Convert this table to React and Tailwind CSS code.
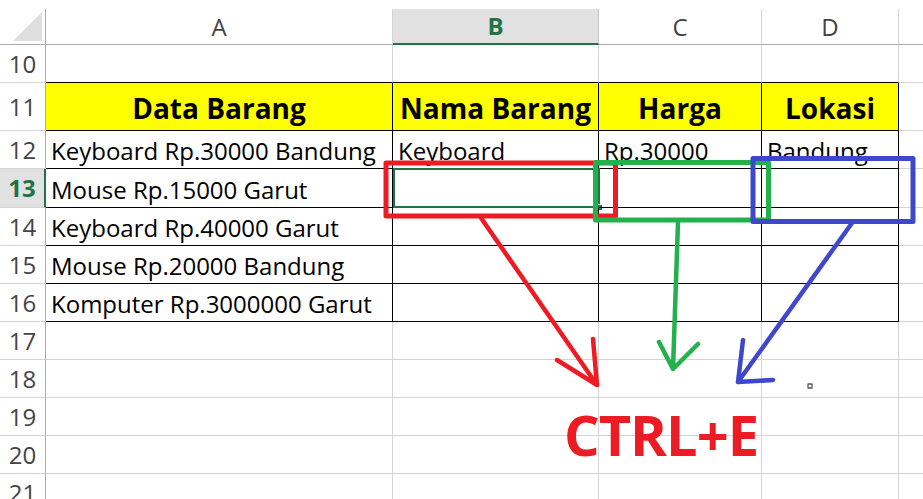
const cols = [
  { key: "A", w: "w-[347px]" },
  { key: "B", w: "w-[206px]" },
  { key: "C", w: "w-[163px]" },
  { key: "D", w: "w-[137px]" },
  { key: "E", w: "w-[40px]" },
];

const rows = [
  { n: 10, h: "h-[38px]", cells: ["", "", "", ""] },
  { n: 11, h: "h-[48px]", head: true, cells: ["Data Barang", "Nama Barang", "Harga", "Lokasi"] },
  { n: 12, h: "h-[38px]", cells: ["Keyboard Rp.30000 Bandung", "Keyboard", "Rp.30000", "Bandung"] },
  { n: 13, h: "h-[39px]", active: true, cells: ["Mouse Rp.15000 Garut", "", "", ""] },
  { n: 14, h: "h-[38px]", cells: ["Keyboard Rp.40000 Garut", "", "", ""] },
  { n: 15, h: "h-[38px]", cells: ["Mouse Rp.20000 Bandung", "", "", ""] },
  { n: 16, h: "h-[38px]", cells: ["Komputer Rp.3000000 Garut", "", "", ""] },
  { n: 17, h: "h-[38px]" },
  { n: 18, h: "h-[38px]" },
  { n: 19, h: "h-[38px]" },
  { n: 20, h: "h-[38px]" },
  { n: 21, h: "h-[38px]" },
];

const cellFont = { fontFamily: '"Open Sans", "Noto Sans", sans-serif' };

const Cell = ({ row, col, text }) => {
  const inTable = row.n >= 11 && row.n <= 16 && col < 4;
  const aboveTable = row.n === 10 && col < 4;
  const isHead = row.head && col < 4;
  let border = "border-r border-b border-[#d4d4d4]";
  if (inTable) border = "border-r border-b border-black";
  else if (aboveTable) border = "border-r border-r-[#d4d4d4] border-b border-b-black";

  return (
    <div
      className={`${cols[col].w} ${row.h} shrink-0 relative flex ${border} ${
        isHead ? "bg-[#ffff00] items-center justify-center" : "items-end px-[5px] pb-[1px]"
      }`}
    >
      {text ? (
        <span
          className={
            isHead
              ? "text-[28px] font-bold leading-none text-black whitespace-nowrap pt-[3px]"
              : "text-[24px] leading-[32px] text-black whitespace-nowrap"
          }
        >
          {text}
        </span>
      ) : null}
      {row.active && col === 1 ? (
        <div className="absolute left-0 top-[-1px] w-[207px] h-[40px] border-2 border-[#217346]">
          <div className="absolute right-[-5px] bottom-[-5px] w-[7px] h-[7px] bg-[#217346] border border-white" />
        </div>
      ) : null}
    </div>
  );
};

const Overlay = () => (
  <svg
    className="absolute left-0 top-0 pointer-events-none"
    width="923"
    height="499"
    viewBox="0 0 923 499"
    fill="none"
    strokeLinecap="round"
    strokeLinejoin="round"
  >
    {/* boxes */}
    <rect x="386" y="163" width="229.5" height="53" stroke="#ed1c24" strokeWidth="5" strokeLinecap="butt" />
    <rect x="595.5" y="162.5" width="173" height="57.5" stroke="#22b14c" strokeWidth="5" strokeLinecap="butt" />
    <rect x="753" y="158.5" width="160" height="63" stroke="#3f48cc" strokeWidth="5" strokeLinecap="butt" />
    {/* red arrow */}
    <path d="M481 218 L597 385 M593 339 L597 385 L557 360" stroke="#ed1c24" strokeWidth="4.5" />
    {/* green arrow */}
    <path d="M678 222 L673 369 M659 342 L673 369 L698 344" stroke="#22b14c" strokeWidth="4.5" />
    {/* blue arrow */}
    <path d="M852 223 L738 382 M743 340 L738 382 L773 380" stroke="#3f48cc" strokeWidth="4.5" />
    <rect x="808" y="384" width="4" height="4" stroke="#555" strokeWidth="1.3" />
  </svg>
);

export default function App() {
  return (
    <div className="relative w-[923px] h-[499px] overflow-hidden bg-white" style={cellFont}>
      <div className="h-[9px]" />
      {/* column headers */}
      <div className="flex h-[36px]">
        <div className="w-[46px] shrink-0 relative border-r border-b border-[#ababab] overflow-hidden">
          <div className="absolute right-[3px] bottom-[3px] w-0 h-0 border-l-[29px] border-l-transparent border-b-[29px] border-b-[#dfdfdf]" />
        </div>
        {cols.map((c) => (
          <div
            key={c.key}
            className={`${c.w} shrink-0 flex items-center justify-center text-[24px] ${
              c.key === "B"
                ? "bg-[#e1e1e1] border-r border-[#c6c6c6] border-b-2 border-b-[#217346] font-bold text-[#217346]"
                : "border-r border-[#d4d4d4] border-b border-b-[#ababab] text-[#444444]"
            }`}
          >
            {c.key === "E" ? "" : c.key}
          </div>
        ))}
      </div>
      {rows.map((row) => (
        <div key={row.n} className="flex">
          <div
            className={`w-[46px] shrink-0 ${row.h} flex items-center justify-center text-[24px] border-b border-[#d4d4d4] ${
              row.active
                ? "bg-[#e1e1e1] font-bold text-[#217346] border-r-2 border-r-[#217346]"
                : "border-r border-r-[#ababab] text-[#444444]"
            }`}
          >
            {row.n}
          </div>
          {cols.map((c, i) => (
            <Cell key={c.key} row={row} col={i} text={row.cells ? row.cells[i] : ""} />
          ))}
        </div>
      ))}
      <Overlay />
      <div className="absolute left-[564px] top-[406px] text-[56px] font-bold leading-none text-[#ed1c24] tracking-[-1px]">
        CTRL+E
      </div>
    </div>
  );
}
